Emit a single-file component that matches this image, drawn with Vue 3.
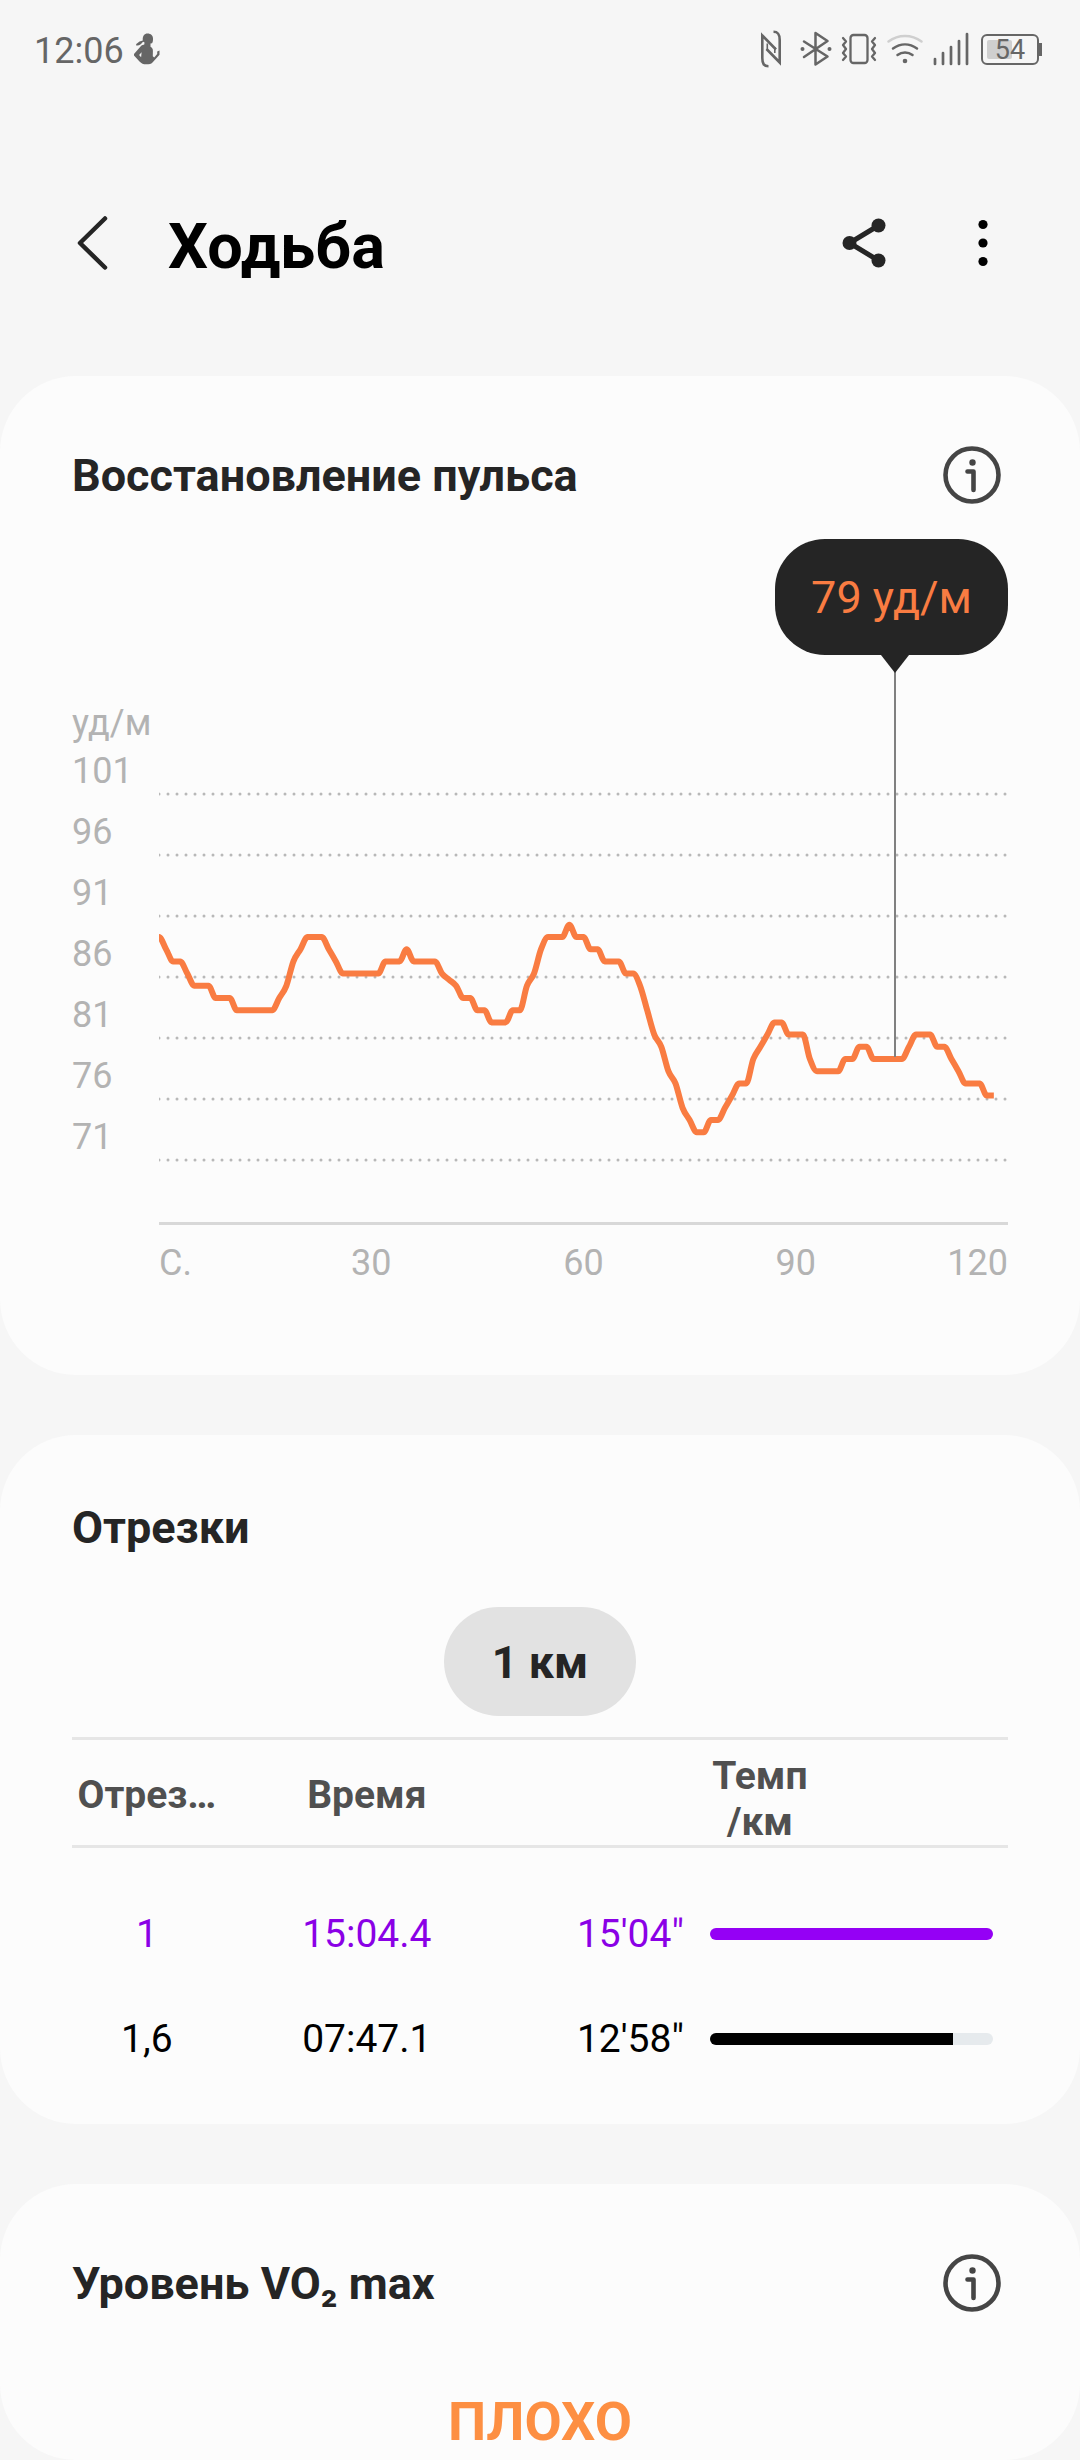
<template>
  <div class="page">
    <div class="status-bar">
      <div class="status-left">
        <span class="clock">12:06</span>
        <svg class="status-icon" width="28" height="32" viewBox="0 0 28 32" aria-hidden="true">
          <path d="M14.500 0.500c3.500 0 5.500 2.200 5.500 5 0 1.600 0 3.500-1 4.800l-1.500 0.200v3.200c1.700 0.800 2.500 2.200 2.400 4.200l-0.100 5.400 1.400 1.300 3-3.600v-2.600l2.300-0.800v4.200l-7 7.700c-1.400 1.600-3.200 1.700-6 1.700-3.600 0-4.800-0.700-7-2.800L1 22.500v-1.600l7-8c1.200-0.900 2.500-0.900 3.400-1.600V9.300L10 8.800C8 11.500 6 13 3 12.300l0.300-1.200L6.500 8.600l3.300-1C9.300 3 11.500 0.500 14.500 0.500zM8.600 19.200l-2.500 2.800 2 2.300z" fill="#666" fill-rule="evenodd" />
        </svg>
      </div>
      <div class="status-right">
        <svg class="nfc" width="22" height="38" viewBox="0 0 22 38" aria-hidden="true">
          <g fill="none" stroke="#666" stroke-width="2.600">
            <path d="M8.500 36.300C4 36.300 2.300 34 2.300 28V5.500L16 19.500" />
            <path d="M13.500 1.700C18 1.700 19.700 4 19.700 10v22.500L6.500 19" />
            <path d="M7.300 13.500V20M14.800 17v6" stroke-width="1.600" />
          </g>
        </svg>
        <svg width="32" height="38" viewBox="0 0 32 38" aria-hidden="true">
          <path d="M4 11.500L27.500 26.500 15.500 34.500V3L27.500 11 4 27" fill="none" stroke="#666" stroke-width="2.500" stroke-linecap="round" stroke-linejoin="round" />
          <circle cx="2.500" cy="19" r="2" fill="#666" />
          <circle cx="29.500" cy="19" r="2" fill="#666" />
        </svg>
        <svg width="36" height="38" viewBox="0 0 36 38" aria-hidden="true">
          <g fill="none" stroke="#666" stroke-width="2.300" stroke-linecap="round" stroke-linejoin="round">
            <rect x="9.500" y="5" width="17" height="28" rx="3" />
            <path d="M2 8l3 3.500-3 3.500 3 4-3 4 3 3.500-3 3.500M34 8l-3 3.500 3 3.500-3 4 3 4-3 3.500 3 3.500" />
          </g>
        </svg>
        <svg width="38" height="38" viewBox="0 0 38 38" aria-hidden="true">
          <g fill="none" stroke-width="2.500" stroke-linecap="round">
            <path d="M2.500 11.500C12.500 4 25.500 4 35.500 11.500" stroke="#cfcfcf" />
            <path d="M7 18.500C14.500 13 23.500 13 31 18.500" stroke="#666" />
            <path d="M11.500 25C16 21.500 22 21.500 26.500 25" stroke="#666" />
          </g>
          <circle cx="19" cy="31" r="2.300" fill="#666" />
        </svg>
        <svg width="36" height="38" viewBox="0 0 36 38" aria-hidden="true">
          <path d="M2 34v-5M10 34V23M18 34V17M26 34V11M34 34V4" fill="none" stroke="#666" stroke-width="2.700" stroke-linecap="round" />
        </svg>
        <div class="battery">
          <div class="battery-body">
            <div class="battery-level" :style="{ width: battery + '%' }"></div>
            <span class="battery-text">{{ battery }}</span>
          </div>
          <div class="battery-tip"></div>
        </div>
      </div>
    </div>

    <header class="app-bar">
      <button class="icon-btn" type="button" aria-label="Назад">
        <svg width="72" height="72" viewBox="0 0 72 72">
          <path d="M48 11.500L23 36 48 60.500" fill="none" stroke="#252525" stroke-width="4.500" stroke-linecap="round" stroke-linejoin="round" />
        </svg>
      </button>
      <h1 class="page-title">Ходьба</h1>
      <div class="app-actions">
        <button class="icon-btn" type="button" aria-label="Поделиться">
          <svg width="72" height="72" viewBox="0 0 72 72">
            <path d="M50.500 18.500L21.500 36l29 17.500" fill="none" stroke="#252525" stroke-width="5" />
            <g fill="#252525">
              <circle cx="21.500" cy="36" r="7" />
              <circle cx="50.500" cy="18.500" r="7" />
              <circle cx="50.500" cy="53.500" r="7" />
            </g>
          </svg>
        </button>
        <button class="icon-btn" type="button" aria-label="Ещё">
          <svg width="72" height="72" viewBox="0 0 72 72">
            <circle cx="36" cy="17.500" r="4.600" />
            <circle cx="36" cy="36" r="4.600" />
            <circle cx="36" cy="54.500" r="4.600" />
          </svg>
        </button>
      </div>
    </header>

    <main class="cards">
      <section class="card card-pulse">
        <div class="card-header">
          <h2 class="card-title">Восстановление пульса</h2>
          <button class="icon-btn" type="button" aria-label="Справка о пульсе">
            <svg width="72" height="72" viewBox="0 0 72 72">
              <circle cx="36" cy="36" r="26.500" fill="none" stroke="#454545" stroke-width="4.600" />
              <path d="M31.500 32.500h6v18.500" fill="none" stroke="#454545" stroke-width="4.600" stroke-linecap="round" stroke-linejoin="round" />
              <circle cx="36.500" cy="23.500" r="3.200" fill="#454545" />
            </svg>
          </button>
        </div>

        <div class="chart">
          <div class="y-axis">
            <span class="y-unit">уд/м</span>
            <span v-for="label in yLabels" :key="label" class="y-label">{{ label }}</span>
          </div>
          <div class="plot">
            <svg class="plot-svg" viewBox="0 0 849 484" preserveAspectRatio="none" aria-hidden="true">
              <line
                v-for="(label, i) in yLabels"
                :key="label"
                class="grid-line"
                x1="0"
                x2="849"
                :y1="53 + i * 61"
                :y2="53 + i * 61"
              />
              <line class="axis-line" x1="0" x2="849" y1="482.500" y2="482.500" />
              <path class="pulse-line" :d="pulsePath" />
            </svg>
            <div class="x-axis">
              <span v-for="label in xLabels" :key="label" class="x-label">{{ label }}</span>
            </div>
            <div class="cursor" :style="{ left: cursorLeft }"></div>
            <div class="tooltip">{{ pulse[cursorTime] }} уд/м</div>
          </div>
        </div>
      </section>

      <section class="card card-splits">
        <div class="card-header">
          <h2 class="card-title">Отрезки</h2>
        </div>
        <button class="pill" type="button">1 км</button>
        <table class="splits">
          <thead>
            <tr>
              <th class="col-num">Отрез…</th>
              <th class="col-time">Время</th>
              <th class="col-pace">Темп<br />/км</th>
            </tr>
          </thead>
          <tbody>
            <tr v-for="split in splits" :key="split.name" :class="{ slowest: split.percent === 100 }">
              <td>{{ split.name }}</td>
              <td>{{ split.time }}</td>
              <td>
                <div class="pace">
                  <span>{{ split.pace }}</span>
                  <div class="bar">
                    <div class="bar-fill" :style="{ width: split.percent + '%' }"></div>
                  </div>
                </div>
              </td>
            </tr>
          </tbody>
        </table>
      </section>

      <section class="card card-vo2">
        <div class="card-header">
          <h2 class="card-title">Уровень VO₂ max</h2>
          <button class="icon-btn" type="button" aria-label="Справка о VO₂ max">
            <svg width="72" height="72" viewBox="0 0 72 72">
              <circle cx="36" cy="36" r="26.500" fill="none" stroke="#454545" stroke-width="4.600" />
              <path d="M31.500 32.500h6v18.500" fill="none" stroke="#454545" stroke-width="4.600" stroke-linecap="round" stroke-linejoin="round" />
              <circle cx="36.500" cy="23.500" r="3.200" fill="#454545" />
            </svg>
          </button>
        </div>
        <p class="vo2-level">ПЛОХО</p>
      </section>
    </main>
  </div>
</template>

<script setup>
import { ref, computed } from 'vue'

const battery = ref(54)

const yLabels = [101, 96, 91, 86, 81, 76, 71]
const xLabels = ['С.', '30', '60', '90', '120']

// one value per second
const pulse = [
  89, 88, 87, 87, 86, 85, 85, 85, 84, 84, 84, 83, 83, 83, 83, 83, 83, 84, 85, 87,
  88, 89, 89, 89, 88, 87, 86, 86, 86, 86, 86, 86, 87, 87, 87, 88, 87, 87, 87, 87,
  86, 85.5, 85, 84, 84, 83, 83, 82, 82, 82, 83, 83, 85, 86, 88, 89, 89, 89, 90, 89,
  89, 88, 88, 87, 87, 87, 86, 86, 85, 83, 81, 80, 78, 77, 75, 74, 73, 73, 74, 74,
  75, 76, 77, 77, 79, 80, 81, 82, 82, 81, 81, 81, 79, 78, 78, 78, 78, 79, 79, 80,
  80, 79, 79, 79, 79, 79, 80, 81, 81, 81, 80, 80, 79, 78, 77, 77, 77, 76, 76,
]

const duration = 120
const cursorTime = ref(104)

const toX = (t) => (t / duration) * 849
const toY = (value) => 318 + (79 - value) * 12.2

// flat at plateaus and peaks, averaged on slopes
const slopeAt = (i) => {
  if (i === 0 || i === pulse.length - 1) return 0
  const before = toY(pulse[i]) - toY(pulse[i - 1])
  const after = toY(pulse[i + 1]) - toY(pulse[i])
  return before * after <= 0 ? 0 : (before + after) / 2
}

const pulsePath = computed(() => {
  let d = `M${toX(0)} ${toY(pulse[0])}`
  for (let i = 1; i < pulse.length; i++) {
    const x0 = toX(i - 1)
    const x1 = toX(i)
    const step = (x1 - x0) / 3
    const c0 = toY(pulse[i - 1]) + slopeAt(i - 1) / 3
    const c1 = toY(pulse[i]) - slopeAt(i) / 3
    d += `C${x0 + step} ${c0} ${x1 - step} ${c1} ${x1} ${toY(pulse[i])}`
  }
  return d
})

const cursorLeft = computed(() => (cursorTime.value / duration) * 100 + '%')

const splits = ref([
  { name: '1', time: '15:04.4', pace: '15\'04"', percent: 100 },
  { name: '1,6', time: '07:47.1', pace: '12\'58"', percent: 86 },
])
</script>

<style>
body {
  background: #f6f6f6;
}
</style>

<style scoped>
.page {
  font-family: Roboto, "Noto Sans", sans-serif;
  color: #252525;
  background: #f6f6f6;
}

.page svg {
  display: block;
}

h1,
h2,
p {
  margin: 0;
}

button {
  border: none;
  padding: 0;
  background: none;
  font-family: inherit;
  color: inherit;
  cursor: pointer;
}

.status-bar {
  display: flex;
  justify-content: space-between;
  align-items: center;
  height: 98px;
  padding: 0 38px 0 34px;
  box-sizing: border-box;
}

.status-left {
  display: flex;
  align-items: center;
  gap: 9px;
}

.clock {
  font-size: 36px;
  line-height: 44px;
  padding-top: 4px;
  color: #666;
}

.status-right {
  display: flex;
  align-items: center;
  gap: 9px;
}

.nfc {
  margin-right: 9px;
}

.battery {
  display: flex;
  align-items: center;
  margin-left: 3px;
}

.battery-body {
  position: relative;
  width: 58px;
  height: 31px;
  padding: 4px;
  box-sizing: border-box;
  border: 2px solid #666;
  border-radius: 6px;
}

.battery-level {
  height: 100%;
  background: #cfcfcf;
  border-radius: 2px;
}

.battery-text {
  position: absolute;
  inset: 0;
  font-size: 27px;
  line-height: 28px;
  text-align: center;
  color: #666;
}

.battery-tip {
  width: 3px;
  height: 13px;
  background: #666;
}

.app-bar {
  display: flex;
  align-items: center;
  padding: 97px 61px 85px 57px;
}

.icon-btn {
  flex: none;
  width: 72px;
  height: 72px;
}

.page-title {
  margin-left: 39px;
  padding-top: 8px;
  font-size: 63px;
  line-height: 88px;
  font-weight: 700;
  color: #000;
}

.app-actions {
  display: flex;
  gap: 47px;
  margin-left: auto;
}

.cards {
  display: flex;
  flex-direction: column;
  gap: 60px;
}

.card {
  padding: 63px 72px 0;
  background: #fcfcfc;
  border-radius: 76px;
}

.card-header {
  display: flex;
  align-items: center;
  justify-content: space-between;
}

.card-title {
  padding-top: 2px;
  font-size: 45px;
  line-height: 56px;
  font-weight: 700;
}

/* pulse */
.card-pulse {
  padding-bottom: 92px;
}

.chart {
  display: flex;
  color: #b3b3b3;
  font-size: 36px;
}

.y-axis {
  display: flex;
  flex-direction: column;
  flex: none;
  width: 87px;
  padding-top: 194px;
}

.y-unit {
  line-height: 36px;
}

.y-label {
  line-height: 61px;
}

.plot {
  position: relative;
  flex: 1;
  padding-top: 230px;
}

.plot-svg {
  width: 100%;
  height: 484px;
}

.grid-line {
  stroke: #b8b8b8;
  stroke-width: 3;
  stroke-linecap: round;
  stroke-dasharray: 0 9;
  vector-effect: non-scaling-stroke;
}

.axis-line {
  stroke: #d8d8d8;
  stroke-width: 3;
}

.pulse-line {
  fill: none;
  stroke: #f97c42;
  stroke-width: 6;
  stroke-linejoin: round;
  vector-effect: non-scaling-stroke;
}

.x-axis {
  display: grid;
  grid-template-columns: 1fr 2fr 2fr 2fr 1fr;
  padding-top: 17px;
  line-height: 42px;
}

.x-label {
  text-align: center;
}

.x-label:first-child {
  text-align: left;
}

.x-label:last-child {
  text-align: right;
}

.card-pulse {
  padding-bottom: 91px;
}

.cursor {
  position: absolute;
  top: 144px;
  width: 2px;
  height: 402px;
  margin-left: -1px;
  background: #808080;
}

.cursor::before {
  content: "";
  position: absolute;
  top: 0;
  left: -13px;
  border: 14px solid transparent;
  border-top: 18px solid #252525;
  border-bottom: none;
}

.tooltip {
  position: absolute;
  top: 28px;
  right: 0;
  padding: 33px 36px 31px;
  border-radius: 50px;
  background: #252525;
  color: #f97c42;
  font-size: 45px;
  line-height: 52px;
}

/* splits */
.card-splits {
  padding-bottom: 33px;
}

.pill {
  display: block;
  margin: 51px auto 21px;
  padding: 29px 48px 27px;
  border-radius: 55px;
  background: #e2e2e2;
  font-size: 45px;
  line-height: 53px;
  font-weight: 700;
}

.splits {
  width: 100%;
  table-layout: fixed;
  border-spacing: 0;
  font-size: 39px;
  line-height: 46px;
  text-align: center;
}

.splits th {
  height: 111px;
  box-sizing: border-box;
  padding: 4px 0 0;
  border-top: 3px solid #e6e6e6;
  border-bottom: 3px solid #e6e6e6;
  color: #505050;
  font-weight: 700;
}

.splits .col-num {
  width: 16%;
}

.splits .col-time {
  width: 31%;
}

.splits .col-pace {
  padding-top: 13px;
}

.splits td {
  height: 105px;
  padding: 0;
  color: #000;
}

.splits tbody tr:first-child td {
  padding-top: 33px;
}

.splits .slowest td {
  color: #8a00e6;
}

.pace {
  display: flex;
  align-items: center;
  gap: 26px;
  padding: 0 15px 0 65px;
}

.bar {
  flex: 1;
  height: 12px;
  border-radius: 6px;
  background: #e6eaed;
  overflow: hidden;
}

.bar-fill {
  height: 100%;
  background: #000;
}

.slowest .bar-fill {
  background: #9500f5;
}

/* vo2 */
.card-vo2 {
  padding-bottom: 6px;
}

.vo2-level {
  margin-top: 71px;
  font-size: 54px;
  line-height: 64px;
  font-weight: 700;
  text-align: center;
  color: #fd8f42;
}
</style>
